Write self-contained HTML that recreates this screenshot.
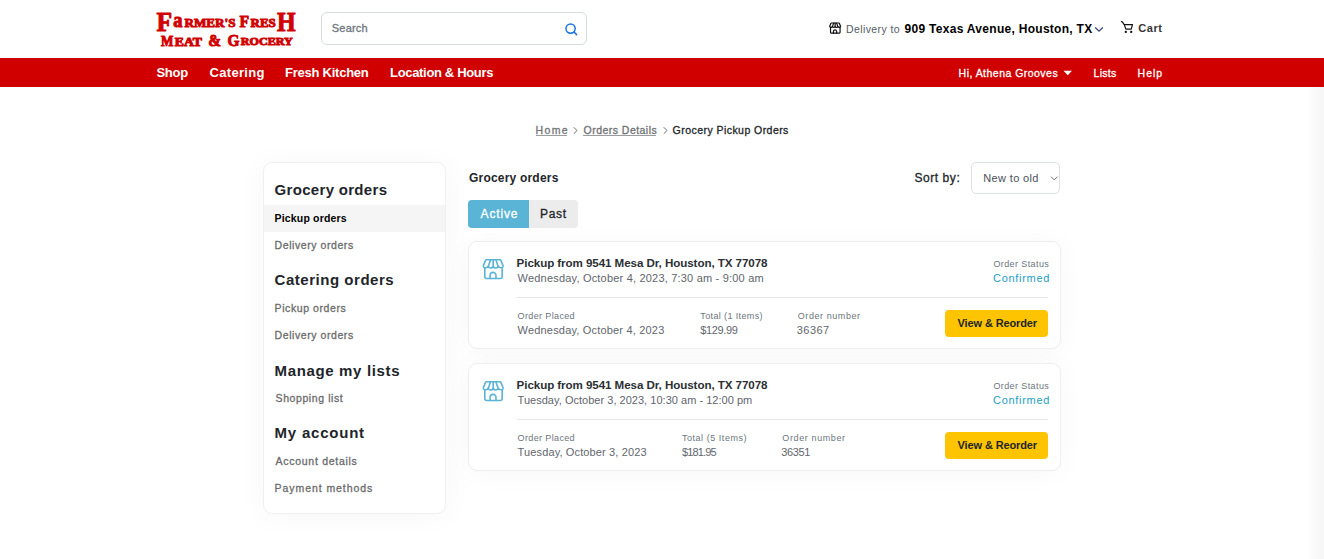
<!DOCTYPE html>
<html><head><meta charset="utf-8">
<style>
html,body{margin:0;padding:0;}
body{width:1324px;height:559px;overflow:hidden;position:relative;background:#fff;font-family:"Liberation Sans",sans-serif;}
.t{position:absolute;white-space:nowrap;line-height:1;}
#nav{position:absolute;left:0;top:58px;width:1324px;height:29px;background:#d00000;}
#rshade{position:absolute;left:1306px;top:87px;width:18px;height:472px;background:linear-gradient(to right,rgba(0,0,0,0),rgba(0,0,0,0.04));}
#search{position:absolute;left:321px;top:12px;width:264px;height:31px;border:1px solid #d5dbe1;border-radius:6px;background:#fff;}
.panel{position:absolute;background:#fff;border:1px solid #f0f0f0;border-radius:9px;box-shadow:0 2px 30px rgba(0,0,0,0.04);}
#side{left:263px;top:162px;width:181px;height:350px;}
#hl{position:absolute;left:264px;top:205px;width:181px;height:27px;background:#f5f5f5;}
.card{position:absolute;left:468px;width:591px;height:106px;background:#fff;border:1px solid #eeeeee;border-radius:9px;box-shadow:0 2px 28px rgba(0,0,0,0.035);}
.sep{position:absolute;left:517px;width:531px;height:1px;background:#e6e6e6;}
.btn{position:absolute;left:945px;width:103px;height:27px;background:#ffc400;border-radius:4px;}
#tabs{position:absolute;left:468px;top:200px;width:110px;height:28px;border-radius:4px;background:#ececec;overflow:hidden;}
#tabs .a{position:absolute;left:0;top:0;width:61px;height:28px;background:#5ab4d6;}
#sel{position:absolute;left:971px;top:162px;width:87px;height:30px;border:1px solid #dde1e6;border-radius:5px;background:#fff;}
#logo{position:absolute;left:150px;top:8px;width:160px;height:44px;}
.u{position:absolute;height:1px;}
</style></head><body>
<div id="nav"></div>
<div id="rshade"></div>
<div id="search"></div>
<svg style="position:absolute;left:563.5px;top:21.7px" width="15" height="14" viewBox="0 0 15 14" fill="none" stroke="#1b74e4" stroke-width="1.5" stroke-linecap="round"><circle cx="6.6" cy="6.6" r="4.6"/><path d="M10 10l2.6 2.6"/></svg>
<svg style="position:absolute;left:829.4px;top:21.6px" width="12.6" height="12.6" viewBox="0 0 23 23" fill="none" stroke="#111" stroke-width="2.2" stroke-linejoin="round" stroke-linecap="round"><path d="M4.4 1.8H18Q18.6 1.8 18.9 2.4L21 7.6Q21.3 8.6 20.5 9.3Q19.2 10.2 17.6 9.4Q16.5 8.9 16.2 8.3Q15.6 10 13.7 10Q12 10 11.2 8.5Q10.4 10 8.7 10Q6.8 10 6.2 8.3Q5.9 8.9 4.8 9.4Q3.2 10.2 1.9 9.3Q1.1 8.6 1.4 7.6L3.5 2.4Q3.8 1.8 4.4 1.8Z"/><path d="M8.4 2L6.3 8.4M11.2 2V8.4M14 2L16.1 8.4"/><path d="M2.8 9.8V18.5Q2.8 20.5 4.8 20.5H18.2Q20.2 20.5 20.2 18.5V9.8"/><path d="M8.1 20.5V17.3A2.95 2.95 0 0 1 14 17.3V20.5"/></svg>
<svg style="position:absolute;left:1094px;top:26px" width="10" height="7" viewBox="0 0 10 7" fill="none" stroke="#3d4f72" stroke-width="1.3" stroke-linecap="round"><path d="M1.5 1.8l3.5 3.4l3.5-3.4"/></svg>
<svg style="position:absolute;left:1120px;top:20px" width="16" height="15" viewBox="0 0 16 15" fill="none" stroke="#111" stroke-width="1.2" stroke-linecap="round" stroke-linejoin="round"><path d="M1.4 1.5L2.5 2.1L4.2 4.6H12.5L11.2 9.1H5.9L4.2 4.6"/><circle cx="5.8" cy="11.9" r="0.55" fill="#111"/><circle cx="11.2" cy="11.9" r="0.55" fill="#111"/></svg>
<svg style="position:absolute;left:1063px;top:70px" width="10" height="6" viewBox="0 0 10 6"><path d="M0.5 0.8h8.5l-4.25 4.5z" fill="#fff"/></svg>
<svg style="position:absolute;left:571.5px;top:125.8px" width="7" height="9" viewBox="0 0 7 9" fill="none" stroke="#66707a" stroke-width="1" stroke-linecap="round"><path d="M2 1.5l3 3l-3 3"/></svg>
<svg style="position:absolute;left:661.5px;top:125.8px" width="7" height="9" viewBox="0 0 7 9" fill="none" stroke="#66707a" stroke-width="1" stroke-linecap="round"><path d="M2 1.5l3 3l-3 3"/></svg>
<div class="u" style="left:536px;top:135px;width:31px;background:#9a9c9e"></div>
<div class="u" style="left:583px;top:135px;width:73px;background:#9a9c9e"></div>
<div id="side" class="panel"></div>
<div id="hl"></div>
<div id="tabs"><div class="a"></div></div>
<div id="sel"></div>
<svg style="position:absolute;left:1050px;top:175px" width="9" height="7" viewBox="0 0 9 7" fill="none" stroke="#6a6f75" stroke-width="1" stroke-linecap="round"><path d="M1.3 2l2.9 2.9l2.9-2.9"/></svg>

<div class="card" style="top:241px"></div>
<svg class="store" style="position:absolute;left:482px;top:258px" width="23" height="23" viewBox="0 0 23 23" fill="none" stroke="#5ab4d6" stroke-width="1.6" stroke-linejoin="round" stroke-linecap="round"><path d="M4.4 1.8H18Q18.6 1.8 18.9 2.4L21 7.6Q21.3 8.6 20.5 9.3Q19.2 10.2 17.6 9.4Q16.5 8.9 16.2 8.3Q15.6 10 13.7 10Q12 10 11.2 8.5Q10.4 10 8.7 10Q6.8 10 6.2 8.3Q5.9 8.9 4.8 9.4Q3.2 10.2 1.9 9.3Q1.1 8.6 1.4 7.6L3.5 2.4Q3.8 1.8 4.4 1.8Z"/><path d="M8.4 2L6.3 8.4M11.2 2V8.4M14 2L16.1 8.4"/><path d="M2.8 9.8V18.5Q2.8 20.5 4.8 20.5H18.2Q20.2 20.5 20.2 18.5V9.8"/><path d="M8.1 20.5V17.3A2.95 2.95 0 0 1 14 17.3V20.5"/></svg>
<div class="sep" style="top:297px"></div>
<div class="btn" style="top:310px"></div>


<div class="card" style="top:363px"></div>
<svg class="store" style="position:absolute;left:482px;top:380px" width="23" height="23" viewBox="0 0 23 23" fill="none" stroke="#5ab4d6" stroke-width="1.6" stroke-linejoin="round" stroke-linecap="round"><path d="M4.4 1.8H18Q18.6 1.8 18.9 2.4L21 7.6Q21.3 8.6 20.5 9.3Q19.2 10.2 17.6 9.4Q16.5 8.9 16.2 8.3Q15.6 10 13.7 10Q12 10 11.2 8.5Q10.4 10 8.7 10Q6.8 10 6.2 8.3Q5.9 8.9 4.8 9.4Q3.2 10.2 1.9 9.3Q1.1 8.6 1.4 7.6L3.5 2.4Q3.8 1.8 4.4 1.8Z"/><path d="M8.4 2L6.3 8.4M11.2 2V8.4M14 2L16.1 8.4"/><path d="M2.8 9.8V18.5Q2.8 20.5 4.8 20.5H18.2Q20.2 20.5 20.2 18.5V9.8"/><path d="M8.1 20.5V17.3A2.95 2.95 0 0 1 14 17.3V20.5"/></svg>
<div class="sep" style="top:419px"></div>
<div class="btn" style="top:432px"></div>

<svg style="position:absolute;left:0;top:0" width="320" height="56" viewBox="0 0 320 56" fill="#d10000" stroke="#d10000" stroke-width="1.0" stroke-linejoin="round" font-family="Liberation Serif" font-weight="700">
<text x="156.6" y="31.2" font-size="26.5" textLength="15.6" lengthAdjust="spacingAndGlyphs">F</text>
<text x="173.2" y="26.5" font-size="20" textLength="9.2" lengthAdjust="spacingAndGlyphs">a</text>
<text x="184.4" y="26.5" font-size="13.5" textLength="51.2" lengthAdjust="spacingAndGlyphs">RMER'S</text>
<text x="239.6" y="26.5" font-size="17.2" textLength="9.6" lengthAdjust="spacingAndGlyphs">F</text>
<text x="250.6" y="26.5" font-size="12.8" textLength="25.2" lengthAdjust="spacingAndGlyphs">RES</text>
<text x="277" y="31.2" font-size="26.5" textLength="18.6" lengthAdjust="spacingAndGlyphs">H</text>
<text x="161" y="45.8" font-size="15.5" textLength="12.4" lengthAdjust="spacingAndGlyphs">M</text>
<text x="174.8" y="45.8" font-size="11.8" textLength="27.2" lengthAdjust="spacingAndGlyphs">EAT</text>
<text x="208.3" y="46" font-size="17" textLength="12.8" lengthAdjust="spacingAndGlyphs">&amp;</text>
<text x="227.4" y="46.1" font-size="17" textLength="12" lengthAdjust="spacingAndGlyphs">G</text>
<text x="240.8" y="45.4" font-size="11.3" textLength="51.9" lengthAdjust="spacingAndGlyphs">ROCERY</text>
</svg>
<span id="t_search" class="t" style="left:331.80px;top:23.19px;font-size:11.00px;letter-spacing:0.200px;font-weight:400;color:#6c757d;-webkit-text-stroke:0.3px #6c757d;">Search</span>
<span id="t_deliv" class="t" style="left:846.00px;top:24.21px;font-size:10.50px;letter-spacing:0.400px;font-weight:400;color:#555b61;">Delivery to</span>
<span id="t_addr" class="t" style="left:904.60px;top:23.14px;font-size:12.00px;letter-spacing:0.286px;font-weight:700;color:#000;">909 Texas Avenue, Houston, TX</span>
<span id="t_cart" class="t" style="left:1138.30px;top:23.29px;font-size:11.00px;letter-spacing:0.533px;font-weight:700;color:#363636;">Cart</span>
<span id="t_shop" class="t" style="left:156.40px;top:66.20px;font-size:13.00px;letter-spacing:-0.200px;font-weight:700;color:#fff;">Shop</span>
<span id="t_cater" class="t" style="left:209.60px;top:66.20px;font-size:13.00px;letter-spacing:0.286px;font-weight:700;color:#fff;">Catering</span>
<span id="t_fk" class="t" style="left:285.10px;top:66.20px;font-size:13.00px;letter-spacing:-0.250px;font-weight:700;color:#fff;">Fresh Kitchen</span>
<span id="t_loc" class="t" style="left:390.10px;top:66.20px;font-size:13.00px;letter-spacing:-0.333px;font-weight:700;color:#fff;">Location &amp; Hours</span>
<span id="t_hi" class="t" style="left:958.60px;top:68.11px;font-size:10.50px;letter-spacing:0.471px;font-weight:400;color:#fff;-webkit-text-stroke:0.3px #fff;">Hi, Athena Grooves</span>
<span id="t_lists" class="t" style="left:1093.60px;top:68.11px;font-size:10.50px;letter-spacing:0.250px;font-weight:400;color:#fff;-webkit-text-stroke:0.3px #fff;">Lists</span>
<span id="t_help" class="t" style="left:1137.60px;top:68.11px;font-size:10.50px;letter-spacing:1.000px;font-weight:400;color:#fff;-webkit-text-stroke:0.3px #fff;">Help</span>
<span id="t_bc1" class="t" style="left:535.60px;top:124.81px;font-size:10.50px;letter-spacing:1.333px;font-weight:400;color:#6f7275;-webkit-text-stroke:0.3px #6f7275;">Home</span>
<span id="t_bc2" class="t" style="left:583.60px;top:124.81px;font-size:10.50px;letter-spacing:0.462px;font-weight:400;color:#6f7275;-webkit-text-stroke:0.3px #6f7275;">Orders Details</span>
<span id="t_bc3" class="t" style="left:672.60px;top:124.81px;font-size:10.50px;letter-spacing:0.450px;font-weight:400;color:#212529;-webkit-text-stroke:0.3px #212529;">Grocery Pickup Orders</span>
<span id="t_s1" class="t" style="left:274.60px;top:182.40px;font-size:15.00px;letter-spacing:0.308px;font-weight:700;color:#212529;">Grocery orders</span>
<span id="t_s2" class="t" style="left:274.60px;top:213.11px;font-size:10.50px;letter-spacing:0.167px;font-weight:700;color:#000;">Pickup orders</span>
<span id="t_s3" class="t" style="left:274.60px;top:239.51px;font-size:10.50px;letter-spacing:0.571px;font-weight:400;color:#6b6b6b;-webkit-text-stroke:0.3px #6b6b6b;">Delivery orders</span>
<span id="t_s4" class="t" style="left:274.60px;top:271.70px;font-size:15.00px;letter-spacing:0.529px;font-weight:700;color:#212529;">Catering orders</span>
<span id="t_s5" class="t" style="left:274.60px;top:302.71px;font-size:10.50px;letter-spacing:0.583px;font-weight:400;color:#6b6b6b;-webkit-text-stroke:0.3px #6b6b6b;">Pickup orders</span>
<span id="t_s6" class="t" style="left:274.60px;top:329.91px;font-size:10.50px;letter-spacing:0.571px;font-weight:400;color:#6b6b6b;-webkit-text-stroke:0.3px #6b6b6b;">Delivery orders</span>
<span id="t_s7" class="t" style="left:274.60px;top:363.30px;font-size:15.00px;letter-spacing:0.643px;font-weight:700;color:#212529;">Manage my lists</span>
<span id="t_s8" class="t" style="left:275.60px;top:392.51px;font-size:10.50px;letter-spacing:0.583px;font-weight:400;color:#6b6b6b;-webkit-text-stroke:0.3px #6b6b6b;">Shopping list</span>
<span id="t_s9" class="t" style="left:274.60px;top:424.70px;font-size:15.00px;letter-spacing:0.778px;font-weight:700;color:#212529;">My account</span>
<span id="t_s10" class="t" style="left:275.60px;top:455.51px;font-size:10.50px;letter-spacing:0.714px;font-weight:400;color:#6b6b6b;-webkit-text-stroke:0.3px #6b6b6b;">Account details</span>
<span id="t_s11" class="t" style="left:274.60px;top:482.71px;font-size:10.50px;letter-spacing:0.929px;font-weight:400;color:#6b6b6b;-webkit-text-stroke:0.3px #6b6b6b;">Payment methods</span>
<span id="t_mh" class="t" style="left:469.00px;top:171.54px;font-size:12.00px;letter-spacing:0.200px;font-weight:700;color:#212529;">Grocery orders</span>
<span id="t_tact" class="t" style="left:480.60px;top:208.04px;font-size:12.00px;letter-spacing:0.840px;font-weight:400;color:#fff;-webkit-text-stroke:0.3px #fff;">Active</span>
<span id="t_tpast" class="t" style="left:540.10px;top:208.04px;font-size:12.00px;letter-spacing:0.667px;font-weight:400;color:#212529;-webkit-text-stroke:0.3px #212529;">Past</span>
<span id="t_sort" class="t" style="left:914.40px;top:172.44px;font-size:12.00px;letter-spacing:0.571px;font-weight:400;color:#212529;-webkit-text-stroke:0.3px #212529;">Sort by:</span>
<span id="t_sel" class="t" style="left:983.30px;top:173.09px;font-size:11.00px;letter-spacing:0.356px;font-weight:400;color:#495057;">New to old</span>
<span id="t_c0t" class="t" style="left:516.60px;top:257.08px;font-size:11.60px;letter-spacing:-0.071px;font-weight:700;color:#2b2f33;">Pickup from 9541 Mesa Dr, Houston, TX 77078</span>
<span id="t_c0s" class="t" style="left:517.60px;top:272.99px;font-size:11.00px;letter-spacing:0.195px;font-weight:400;color:#5f666d;">Wednesday, October 4, 2023, 7:30 am - 9:00 am</span>
<span id="t_c0os" class="t" style="left:993.40px;top:259.58px;font-size:9.00px;letter-spacing:0.400px;font-weight:400;color:#6c757d;">Order Status</span>
<span id="t_c0cf" class="t" style="left:993.00px;top:272.59px;font-size:11.00px;letter-spacing:0.700px;font-weight:400;color:#1ea0c3;">Confirmed</span>
<span id="t_c0op" class="t" style="left:517.60px;top:311.98px;font-size:9.00px;letter-spacing:0.364px;font-weight:400;color:#6c757d;">Order Placed</span>
<span id="t_c0opv" class="t" style="left:517.60px;top:324.89px;font-size:11.00px;letter-spacing:0.184px;font-weight:400;color:#5f666d;">Wednesday, October 4, 2023</span>
<span id="t_c0tl" class="t" style="left:700.30px;top:312.18px;font-size:9.00px;letter-spacing:0.371px;font-weight:400;color:#6c757d;">Total (1 Items)</span>
<span id="t_c0tv" class="t" style="left:700.30px;top:325.09px;font-size:11.00px;letter-spacing:-0.367px;font-weight:400;color:#5f666d;">$129.99</span>
<span id="t_c0onl" class="t" style="left:797.80px;top:312.18px;font-size:9.00px;letter-spacing:0.564px;font-weight:400;color:#6c757d;">Order number</span>
<span id="t_c0onv" class="t" style="left:796.80px;top:325.09px;font-size:11.00px;letter-spacing:0.450px;font-weight:400;color:#5f666d;">36367</span>
<span id="t_c0btn" class="t" style="left:957.60px;top:318.09px;font-size:11.00px;letter-spacing:-0.123px;font-weight:700;color:#212529;">View &amp; Reorder</span>
<span id="t_c1t" class="t" style="left:516.60px;top:379.08px;font-size:11.60px;letter-spacing:-0.071px;font-weight:700;color:#2b2f33;">Pickup from 9541 Mesa Dr, Houston, TX 77078</span>
<span id="t_c1s" class="t" style="left:517.60px;top:394.99px;font-size:11.00px;letter-spacing:0.023px;font-weight:400;color:#5f666d;">Tuesday, October 3, 2023, 10:30 am - 12:00 pm</span>
<span id="t_c1os" class="t" style="left:993.40px;top:381.58px;font-size:9.00px;letter-spacing:0.400px;font-weight:400;color:#6c757d;">Order Status</span>
<span id="t_c1cf" class="t" style="left:993.00px;top:394.59px;font-size:11.00px;letter-spacing:0.700px;font-weight:400;color:#1ea0c3;">Confirmed</span>
<span id="t_c1op" class="t" style="left:517.60px;top:433.98px;font-size:9.00px;letter-spacing:0.364px;font-weight:400;color:#6c757d;">Order Placed</span>
<span id="t_c1opv" class="t" style="left:517.60px;top:446.89px;font-size:11.00px;letter-spacing:0.130px;font-weight:400;color:#5f666d;">Tuesday, October 3, 2023</span>
<span id="t_c1tl" class="t" style="left:681.90px;top:434.18px;font-size:9.00px;letter-spacing:0.543px;font-weight:400;color:#6c757d;">Total (5 Items)</span>
<span id="t_c1tv" class="t" style="left:681.90px;top:447.09px;font-size:11.00px;letter-spacing:-0.833px;font-weight:400;color:#5f666d;">$181.95</span>
<span id="t_c1onl" class="t" style="left:782.30px;top:434.18px;font-size:9.00px;letter-spacing:0.618px;font-weight:400;color:#6c757d;">Order number</span>
<span id="t_c1onv" class="t" style="left:781.30px;top:447.09px;font-size:11.00px;letter-spacing:-0.400px;font-weight:400;color:#5f666d;">36351</span>
<span id="t_c1btn" class="t" style="left:957.60px;top:440.09px;font-size:11.00px;letter-spacing:-0.123px;font-weight:700;color:#212529;">View &amp; Reorder</span>
</body></html>
